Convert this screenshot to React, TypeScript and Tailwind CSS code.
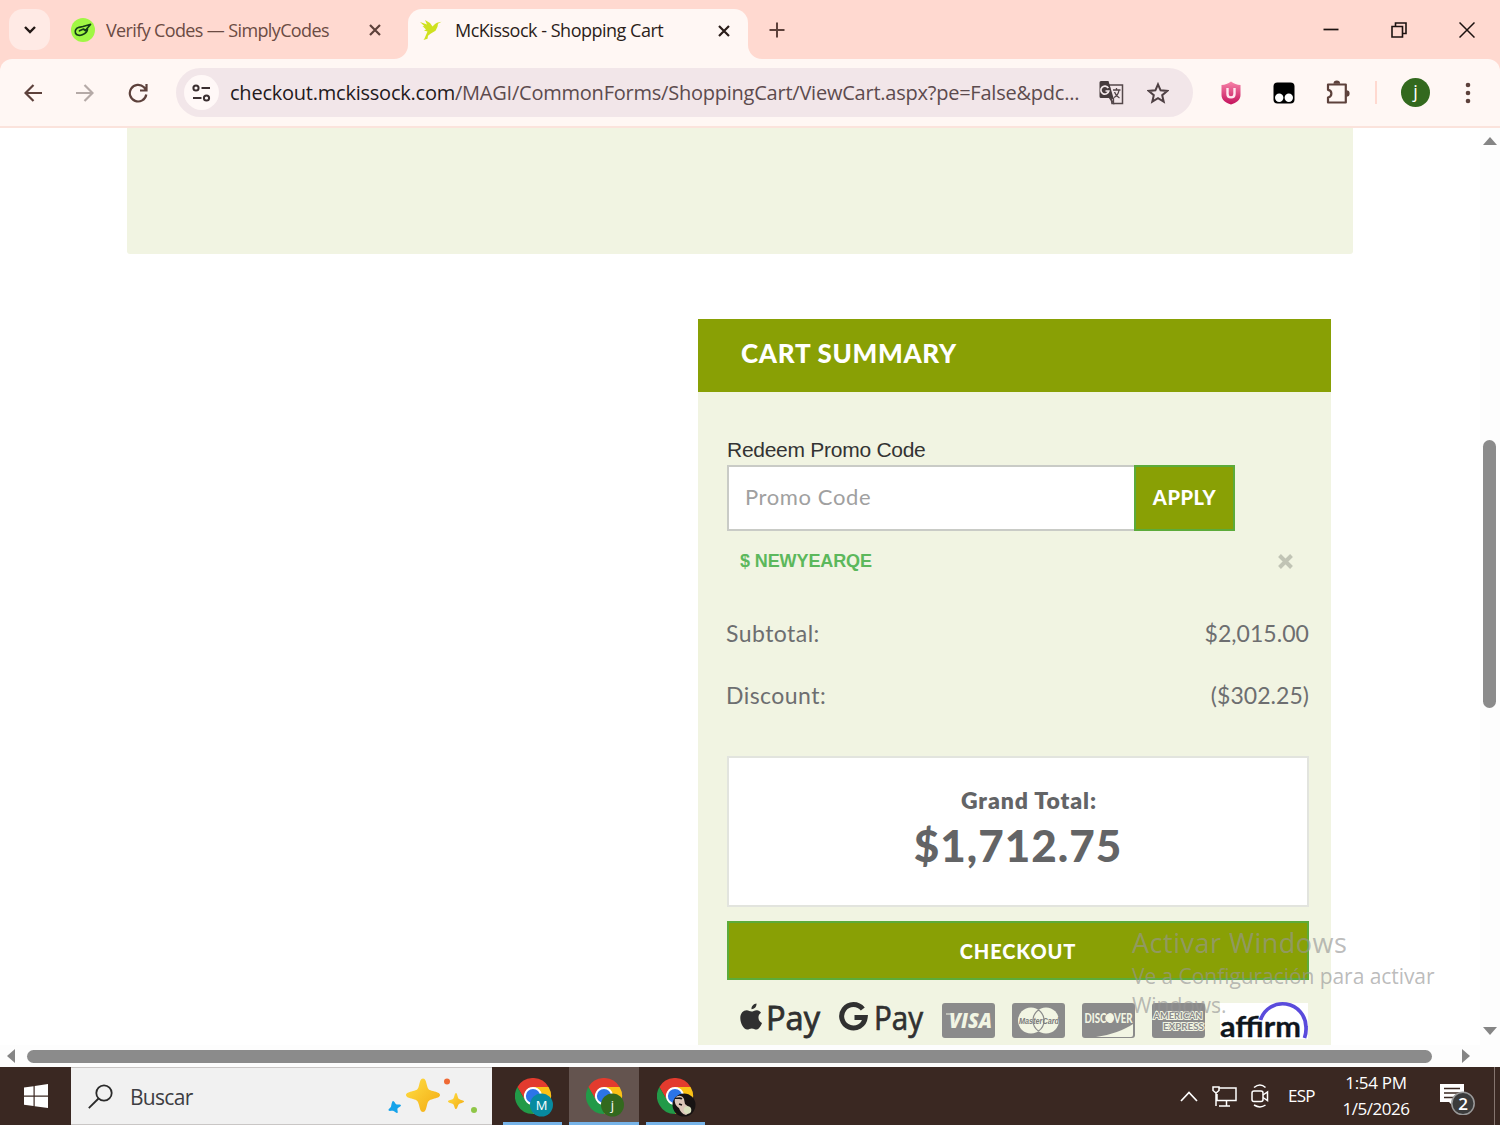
import type { ReactNode } from "react";
import { clsx } from "clsx";

const SEGOE = "font-['Open_Sans','Noto_Sans',sans-serif]";
const AVENIR = "font-['Lato',sans-serif]";
const ARIAL = "font-['Liberation_Sans',Arial,sans-serif]";

function CloseIcon({ className }: { className?: string }) {
  return (
    <svg viewBox="0 0 12 12" className={clsx("size-3", className)} fill="none" stroke="currentColor" strokeWidth="2.200">
      <path d="M1 1l10 10M11 1L1 11" />
    </svg>
  );
}

function SimplyCodesIcon() {
  return (
    <svg viewBox="0 0 24 24" className="size-6" fill="none">
      <circle cx="12" cy="12" r="12" fill="#a0f744" />
      <path
        d="M12 8.500l-4 .8c-3 .8-4.500 3.500-3.500 5.900 1 2.300 4.300 2.500 6.800 1.500 3.300-1.300 5.200-3.700 5.200-6M8.500 12.800l4-1.800 1.800 1.500L19.500 6.500M12 8.500l7-2"
        stroke="#143c17"
        strokeWidth="1.700"
        strokeLinecap="round"
        strokeLinejoin="round"
      />
    </svg>
  );
}

function HummingbirdIcon() {
  return (
    <svg viewBox="0 0 24 22" className="h-[22px] w-6">
      <path
        d="M1 2l7 2.500L6 0l5 3 2.500 3.500L16 4l2-1.200 4.500-1-3.500 2-.5 3-2 4-5 3-2.500 2-.5 3-4 1.200 1-1.500L7 15l1.500-3.500L5 10.500l2-1L3.500 6l2 .300z"
        fill="#cfe11f"
      />
    </svg>
  );
}

function TranslateIcon() {
  return (
    <svg viewBox="0 0 25 25" className="size-[25px]">
      <path d="M10 5h13.500v18.500H13z" fill="none" stroke="#54474a" strokeWidth="1.500" />
      <path d="M2 1h7.500l5 17H2a1.500 1.500 0 0 1-1.500-1.500v-14A1.500 1.500 0 0 1 2 1z" fill="#463b3d" />
      <path d="M9.300 8A4 4 0 1 0 9.800 11H6.500" fill="none" stroke="#f3e8ea" strokeWidth="1.700" />
      <path d="M14 10h7.500M17.500 8v2M20 10c-.5 4-3 6.500-5 7.500M15.500 12c1 3 3 5 5 6M11 18.500l3.500 4.500v-4.500z" fill="none" stroke="#54474a" strokeWidth="1.300" />
    </svg>
  );
}

function PuzzleIcon() {
  return (
    <svg viewBox="0 0 26 26" className="size-[26px]">
      <path
        d="M3 4.500h17.800v18H3v-5c4.500-.8 4.500-7 0-7.700z"
        fill="none"
        stroke="#5d413b"
        strokeWidth="2.200"
        strokeLinejoin="round"
      />
      <path d="M8.500 3.700a3.300 3.300 0 0 1 6.600 0zM21.300 10.200a3.300 3.300 0 0 1 0 6.600z" fill="#5d413b" />
    </svg>
  );
}

function Browser() {
  return (
    <header className={clsx("shrink-0 bg-[#ffd9d0]", SEGOE)}>
      {/* Tab strip */}
      <div className="flex h-[59px] items-center">
        <div className="ml-[9px] flex size-[41px] items-center justify-center rounded-[14px] bg-[#ffeae5]">
          <svg viewBox="0 0 12 8" className="h-2 w-3" fill="none" stroke="#231815" strokeWidth="2.400">
            <path d="M1 1l5 5 5-5" />
          </svg>
        </div>
        <div className="ml-[21px] flex w-[337px] items-center text-[#6b4b43]">
          <SimplyCodesIcon />
          <span className="ml-[11px] w-[263px] pt-0.5 text-[18px] tracking-[-0.63px] whitespace-nowrap">Verify Codes — SimplyCodes</span>
          <CloseIcon className="text-[#5d413b]" />
        </div>
        <div className="relative flex h-[50px] w-[340px] self-end items-center rounded-t-[14px] bg-[#fff7f4] pb-[7px] pl-[11px] text-[#2b1d1a]">
          <svg viewBox="0 0 14 14" className="absolute bottom-0 -left-[14px] size-[14px] text-[#fff7f4]">
            <path d="M14 0v14H0A14 14 0 0 0 14 0z" fill="currentColor" />
          </svg>
          <HummingbirdIcon />
          <span className="ml-3 w-[263px] text-[18px] tracking-[-0.49px] whitespace-nowrap">McKissock - Shopping Cart</span>
          <CloseIcon className="text-[#2b1d1a]" />
          <svg viewBox="0 0 14 14" className="absolute -right-[14px] bottom-0 size-[14px] text-[#fff7f4]">
            <path d="M0 0v14h14A14 14 0 0 1 0 0z" fill="currentColor" />
          </svg>
        </div>
        <svg viewBox="0 0 16 16" className="ml-[21px] size-4" stroke="#5d413b" strokeWidth="2">
          <path d="M8 .5v15M.5 8h15" />
        </svg>
        <div className="mr-[25px] ml-auto flex items-center gap-[52px]">
          <svg viewBox="0 0 16 16" className="size-4" stroke="#1c1210" strokeWidth="1.700">
            <path d="M.5 7.500h15" />
          </svg>
          <svg viewBox="0 0 16 16" className="size-4" fill="none" stroke="#1c1210" strokeWidth="1.600">
            <path d="M1 4.500h10.500v10.500H1zM4.500 4V1H15v10.500h-3" />
          </svg>
          <svg viewBox="0 0 16 16" className="size-4" stroke="#1c1210" strokeWidth="1.500">
            <path d="M.5.5l15 15M15.500.5l-15 15" />
          </svg>
        </div>
      </div>

      {/* Toolbar */}
      <div className="flex h-[69px] items-center rounded-t-[12px] border-b-2 border-[#fbe3dc] bg-[#fff7f4]">
        <svg viewBox="0 0 18 18" className="ml-6 size-[18px]" fill="none" stroke="#5d413b" strokeWidth="2.200">
          <path d="M18 9H1.500M9.500 1L1.500 9l8 8" />
        </svg>
        <svg viewBox="0 0 18 18" className="ml-[34px] size-[18px]" fill="none" stroke="#b5aaa7" strokeWidth="2.200">
          <path d="M0 9h16.500M8.500 1l8 8-8 8" />
        </svg>
        <svg viewBox="0 0 20 20" className="ml-[34px] size-5" fill="none" stroke="#5d413b" strokeWidth="2.200">
          <path d="M18.300 11.500A8.300 8.300 0 1 1 16 4.300l2 2.500M18.500 1v6.500H12" />
        </svg>
        <div className="ml-[28px] flex h-[49px] w-[1017px] items-center rounded-full bg-[#f2e6e9] pl-2">
          <div className="flex size-[35px] items-center justify-center rounded-full bg-[#fff8f7]">
            <svg viewBox="0 0 19 18" className="h-[18px] w-[19px]" fill="none" stroke="#3a2e30" strokeWidth="2">
              <circle cx="4" cy="4" r="2.600" />
              <circle cx="14.500" cy="14" r="2.600" />
              <path d="M9.500 4H18M1 14h8.500" />
            </svg>
          </div>
          <div className="ml-[11px] w-[869px] pt-px text-[20px] tracking-[-0.23px] whitespace-nowrap text-[#5c4b4e]">
            <span className="text-[#231a1c]">checkout.mckissock.com</span>
            /MAGI/CommonForms/ShoppingCart/ViewCart.aspx?pe=False&amp;pdc...
          </div>
          <TranslateIcon />
          <svg viewBox="0 0 22 22" className="ml-[23px] size-[22px]" fill="none" stroke="#4f4144" strokeWidth="2">
            <path d="M11 2.300l2.600 6 6.600.6-5 4.300 1.500 6.500-5.700-3.500-5.700 3.500 1.500-6.500-5-4.300 6.600-.6z" />
          </svg>
        </div>
        <svg viewBox="0 0 20 24" className="ml-[28px] h-6 w-5">
          <defs>
            <linearGradient id="shield" x1="0" y1="0" x2="0" y2="1">
              <stop offset="0" stopColor="#f783a8" />
              <stop offset="1" stopColor="#c4125c" />
            </linearGradient>
          </defs>
          <path d="M10 .5c3 2.500 6 3.200 9.500 3.500v10c0 5-4 7.500-9.500 9.500C4.500 21.500.5 19 .5 14V4C4 3.700 7 3 10 .5z" fill="url(#shield)" />
          <path d="M6.500 7v6c0 4.500 7 4.500 7 0V7" fill="none" stroke="#ffe8f0" strokeWidth="2.400" />
        </svg>
        <svg viewBox="0 0 22 22" className="ml-8 size-[22px]">
          <rect x=".5" y=".5" width="21" height="21" rx="4" />
          <circle cx="6.200" cy="15.800" r="4.200" fill="#fff" />
          <circle cx="15.800" cy="15.800" r="4.200" fill="#fff" />
        </svg>
        <div className="ml-[30px]">
          <PuzzleIcon />
        </div>
        <div className="ml-6 h-[23px] w-[2px] bg-[#ffd9d0]" />
        <div className="ml-6 flex size-[29px] items-center justify-center rounded-full bg-[#33691e] pb-0.5 text-[18px] text-white">
          j
        </div>
        <svg viewBox="0 0 6 22" className="ml-[35px] h-[22px] w-1.5" fill="#5d413b">
          <circle cx="3" cy="3" r="2.300" />
          <circle cx="3" cy="11" r="2.300" />
          <circle cx="3" cy="19" r="2.300" />
        </svg>
      </div>
    </header>
  );
}

function SummaryRow({ label, value }: { label: string; value: string }) {
  return (
    <div className="mb-[31px] flex h-[31px] items-center justify-between text-[23px] text-[#6d6e70]">
      <span className="-ml-px tracking-[0.45px]">{label}</span>
      <span className="tracking-[0.05px]">{value}</span>
    </div>
  );
}

function Card({ children }: { children: ReactNode }) {
  return (
    <svg viewBox="0 0 53 35" className="h-[35px] w-[53px] shrink-0 overflow-visible">
      <rect width="53" height="35" rx="3" fill="#8b8b8b" />
      {children}
    </svg>
  );
}

function PaymentMethods() {
  return (
    <div className="mt-[23px] flex items-start pl-[13px]">
      <svg viewBox="0 0 82 36" className="h-9 w-[82px] shrink-0 overflow-visible" fill="#303030">
        <path
          d="M16.500 0c.3 3-2 5.500-5 5.500C11.200 2.800 13.700.300 16.500 0zM21 9c-4 2.500-3 8.200 1 9.700-1.200 3.300-3.500 6.300-5.700 6.300-1.700 0-2.600-1-4.500-1s-3 1-4.600 1C3.700 25 .300 19 .300 14c0-4.700 3-7.500 6.400-7.500 2 0 3.300 1.200 4.800 1.200 1.400 0 3-1.400 5.500-1.300 1.600 0 3.100.9 4 2.600z"
          transform="translate(0 .5) scale(1 1.040)"
        />
        <text x="26" y="27" fontFamily="Open Sans" fontSize="32" textLength="54" lengthAdjust="spacingAndGlyphs" stroke="#303030" strokeWidth=".8">
          Pay
        </text>
      </svg>
      <svg viewBox="0 0 86 36" className="ml-[18px] h-9 w-[86px] shrink-0 overflow-visible" fill="#303030">
        <path d="M22.800 6A11.800 11.800 0 1 0 25.200 14.500H14.500" fill="none" stroke="#303030" strokeWidth="5" />
        <text x="34" y="27" fontFamily="Open Sans" fontSize="32" textLength="49" lengthAdjust="spacingAndGlyphs" stroke="#303030" strokeWidth=".7">
          Pay
        </text>
      </svg>
      <div className="ml-4 flex gap-[17px]">
        <Card>
          <text x="7" y="25" fontFamily="Open Sans" fontSize="20.500" fontWeight="800" fontStyle="italic" textLength="43" lengthAdjust="spacingAndGlyphs" fill="#f2f5e3">
            VISA
          </text>
          <path d="M4 11h6l2 7" stroke="#f2f5e3" strokeWidth="1.200" fill="none" />
        </Card>
        <Card>
          <circle cx="19" cy="17.500" r="13" fill="#f2f5e3" />
          <circle cx="34" cy="17.500" r="13" fill="#f2f5e3" />
          <path d="M26.500 6.900a13 13 0 0 0 0 21.200M26.500 6.900a13 13 0 0 1 0 21.200" fill="none" stroke="#8b8b8b" strokeWidth="1.200" />
          <text x="7" y="21" fontFamily="Liberation Sans" fontSize="9.500" fontStyle="italic" fontWeight="700" textLength="40" lengthAdjust="spacingAndGlyphs" fill="#7b7b7b">
            MasterCard
          </text>
        </Card>
        <Card>
          <text x="2.500" y="19.500" fontFamily="Lato" fontSize="12.500" fontWeight="900" textLength="48" lengthAdjust="spacingAndGlyphs" fill="#f2f5e3">
            DISCOVER
          </text>
          <circle cx="27.500" cy="15" r="4.300" fill="#f2f5e3" />
          <path d="M14 34c15-2 28-7 37-13v11a2 2 0 0 1-2 2z" fill="#f2f5e3" />
        </Card>
        <Card>
          <g fill="#8b8b8b" stroke="#f2f5e3" strokeWidth="2" paintOrder="stroke" fontFamily="Lato" fontSize="10" fontWeight="700">
            <text x="1.500" y="15.500" textLength="49" lengthAdjust="spacingAndGlyphs">AMERICAN</text>
            <text x="11" y="27" textLength="41" lengthAdjust="spacingAndGlyphs">EXPRESS</text>
          </g>
        </Card>
      </div>
      <svg viewBox="0 0 88 36" className="ml-[15px] h-9 w-[88px] shrink-0 overflow-visible bg-white">
        <path d="M40.500 17A23.300 23.300 0 0 1 86 24a27 27 0 0 1-1.500 11" fill="none" stroke="#5a4bdc" strokeWidth="3.700" />
        <text x="0" y="34" fontFamily="Lato" fontSize="29" fontWeight="700" textLength="81" lengthAdjust="spacingAndGlyphs" fill="#10161d" stroke="#10161d" strokeWidth=".3">
          affirm
        </text>
      </svg>
    </div>
  );
}

function CartSummary() {
  return (
    <section className={clsx("mt-[65px] ml-[698px] h-[727px] w-[633px] bg-[#f1f4e2]", AVENIR)}>
      <h2 className="flex h-[73px] items-center bg-[#89a005] pb-[5px] pl-[43px] text-[26px] font-black tracking-[0.7px] text-white">
        CART SUMMARY
      </h2>
      <div className="pr-[22px] pl-[29px]">
        <label className={clsx("block pt-[44px] pb-0.5 text-[21px] leading-[28px] tracking-[-0.27px] text-[#333]", ARIAL)}>
          Redeem Promo Code
        </label>
        <div className="-mt-px flex h-[66px]">
          <input
            placeholder="Promo Code"
            className="w-[407px] border-2 border-r-0 border-[#c9cbc6] bg-white pb-1 pl-4 text-[22px] tracking-[0.6px] placeholder:text-[#a0a0a0]"
          />
          <button className="w-[101px] border-2 border-[#5cab3a] bg-[#89a005] pb-0.5 text-[20px] font-black tracking-[0.5px] text-white">
            APPLY
          </button>
        </div>
        <div className={clsx("mt-[15px] flex h-[30px] items-center pl-[13px] text-[#5cb85c]", ARIAL)}>
          <span className="text-[18px] font-bold tracking-[-0.1px] whitespace-nowrap">$ NEWYEARQE</span>
          <svg viewBox="0 0 15 15" className="mr-[16px] ml-auto size-[15px]" stroke="#c1c4b5" strokeWidth="4">
            <path d="M1.500 1.500l12 12M13.500 1.500l-12 12" />
          </svg>
        </div>
        <div className="mt-[42px]">
          <SummaryRow label="Subtotal:" value="$2,015.00" />
          <SummaryRow label="Discount:" value="($302.25)" />
        </div>
        <div className="mt-[45px] flex h-[151px] flex-col items-center border-2 border-[#e2e4de] bg-white pt-[26px] text-[#636466]">
          <span className="pl-[22px] text-[23px] leading-[32px] font-extrabold tracking-[0.9px]">Grand Total:</span>
          <span className="text-[44px] leading-[58px] font-black tracking-[1px]">$1,712.75</span>
        </div>
        <button className="mt-[14px] h-[59px] w-full border-2 border-[#5cab3a] bg-[#89a005] text-[20px] font-black tracking-[0.9px] text-white">
          CHECKOUT
        </button>
        <PaymentMethods />
      </div>
    </section>
  );
}

function Page() {
  return (
    <main className="relative flex h-[939px] shrink-0 flex-col bg-white">
      <div className="flex h-[917px]">
        <div className="w-[1480px] overflow-hidden">
          <div className="ml-[127px] h-[126px] w-[1226px] rounded-b-[3px] bg-[#f1f4e2]" />
          <CartSummary />
        </div>
        <div className="flex w-5 flex-col items-center bg-[#fdfdfd] pt-[9px] pr-px">
          <svg viewBox="0 0 14 8" className="h-2 w-3.5" fill="#858585">
            <path d="M0 8l7-8 7 8z" />
          </svg>
          <div className="mt-[295px] h-[268px] w-[13px] rounded-full bg-[#8b8b8b]" />
          <svg viewBox="0 0 14 8" className="mt-[319px] h-2 w-3.5" fill="#858585">
            <path d="M0 0l7 8 7-8z" />
          </svg>
        </div>
      </div>
      <div className="flex h-[22px] items-center bg-[#fdfdfd] pl-[7px]">
        <svg viewBox="0 0 8 14" className="h-3.5 w-2" fill="#858585">
          <path d="M8 0L0 7l8 7z" />
        </svg>
        <div className="ml-3 h-[13px] w-[1405px] rounded-full bg-[#8b8b8b]" />
        <svg viewBox="0 0 8 14" className="ml-[30px] h-3.5 w-2" fill="#858585">
          <path d="M0 0l8 7-8 7z" />
        </svg>
      </div>

      {/* Activation watermark floats over the page */}
      <div className={clsx("pointer-events-none absolute top-[796px] left-[1132px] w-[340px] text-[#969696]/65", SEGOE)}>
        <p className="text-[27px] leading-[38px] tracking-[0.5px] whitespace-nowrap">Activar Windows</p>
        <p className="text-[21px] leading-[29px] tracking-[-0.06px]">
          Ve a Configuración para activar
          <br />
          Windows.
        </p>
      </div>
    </main>
  );
}

function ChromeIcon({ active, underline, children }: { active?: boolean; underline: string; children: ReactNode }) {
  return (
    <div className={clsx("flex h-full w-[70px] flex-col items-center", active && "bg-[#64544f]")}>
      <svg viewBox="0 0 40 40" className="mt-[11px] ml-1 size-10">
        <g transform="scale(.75)">
          <circle cx="24" cy="24" r="13" fill="#fff" />
          <path d="M3.200 12A24 24 0 0 1 44.800 12L24 12A12 12 0 0 0 13.600 30z" fill="#e33b2e" />
          <path d="M3.200 12A24 24 0 0 1 44.800 12L24 12A12 12 0 0 0 13.600 30z" fill="#fbc116" transform="rotate(120 24 24)" />
          <path d="M3.200 12A24 24 0 0 1 44.800 12L24 12A12 12 0 0 0 13.600 30z" fill="#229a48" transform="rotate(240 24 24)" />
          <circle cx="24" cy="24" r="9.500" fill="#2c74e8" />
        </g>
        {children}
      </svg>
      <div className={clsx("mt-auto h-[3px] bg-[#76b3e8]", underline)} />
    </div>
  );
}

function Badge({ letter, color }: { letter: string; color: string }) {
  return (
    <>
      <circle cx="26.500" cy="27" r="11.500" fill={color} />
      <text x="26.500" y="31.500" fontFamily="Open Sans" fontSize="13" fill="#fff" textAnchor="middle">
        {letter}
      </text>
    </>
  );
}

function Taskbar() {
  return (
    <footer className={clsx("flex h-[58px] shrink-0 items-center bg-[#3a2822] text-white", SEGOE)}>
      <div className="flex w-[71px] items-center justify-center">
        <svg viewBox="0 0 24 24" className="size-6" fill="#fff">
          <path d="M0 3.500l9.500-1.300v9.300H0zM10.700 2L24 0v11.500H10.700zM0 12.700h9.500V22L0 20.700zM10.700 12.700H24V24l-13.300-1.800z" />
        </svg>
      </div>
      <div className="flex h-full w-[421px] items-center border-y border-[#c9c6c5] bg-[#f1f1f1] pl-[17px] text-[#3d3d42]">
        <svg viewBox="0 0 25 25" className="size-[25px]" fill="none" stroke="#2a2a2a" strokeWidth="1.800">
          <circle cx="16" cy="9" r="7.700" />
          <path d="M10.500 14.500L.800 24.200" />
        </svg>
        <span className="ml-[17px] pt-[3px] text-[21px] tracking-[-0.7px]">Buscar</span>
        <svg viewBox="0 0 90 36" className="mr-[15px] ml-auto h-9 w-[90px]">
          <defs>
            <linearGradient id="spark" x1="0" y1="0" x2="1" y2="1">
              <stop offset="0" stopColor="#ffdf45" />
              <stop offset="1" stopColor="#f3aa12" />
            </linearGradient>
          </defs>
          <path d="M36 .5c2.500 0 3 3 4 7s2 4.500 6 5.500 7 2 7 4-3 3-7 4-5 2-6 6-1.500 7-4 7-3-3-4-7-2-5-6-6-7-2-7-4 3-3 7-4 5-1.500 6-5.500 1.500-7 4-7z" fill="url(#spark)" />
          <path d="M69 15c1.500 0 1.500 5 3 6s5 1.200 5 2.500-4 1.500-5.200 2.800S70.500 31 69 31s-1.500-3.500-2.800-4.800S61 25 61 23.500s4-1.500 5.200-2.700S67.500 15 69 15z" fill="url(#spark)" />
          <path d="M6 23c1.200-.3 2 2.500 3.200 3.200S14 26 14 27.300s-3 2-3.500 3.200 1 4.200-.2 4.500-2.800-2-4.300-2.200-4 .800-4.500-.5 2.200-2.300 2.500-3.500S4.800 23.300 6 23z" fill="#16a3ea" />
          <circle cx="60" cy="3.500" r="3" fill="#ef6a35" />
          <circle cx="87" cy="32" r="3" fill="#8fc648" />
        </svg>
      </div>
      <div className="ml-1.5 flex h-full gap-px">
        <ChromeIcon underline="mr-[2px] w-[59px]">
          <Badge letter="M" color="#078aa0" />
        </ChromeIcon>
        <ChromeIcon active underline="w-[70px]">
          <Badge letter="j" color="#33691e" />
        </ChromeIcon>
        <ChromeIcon underline="w-[59px]">
          <circle cx="27" cy="27" r="11.500" fill="#171313" />
          <path d="M18 20c3-3 7-3 9 1l1 5 5 4c1 2 0 5-4 7-4-1-6-4-7-7-3-2-5-5-4-10z" fill="#dbc6b9" />
          <path d="M18 20c2 1 5-1 7 1M20 30l-2 3M22 26l3 1" stroke="#171313" strokeWidth="1.600" fill="none" />
          <circle cx="30.500" cy="32" r="3.800" fill="#d8dfbd" />
        </ChromeIcon>
      </div>
      <div className="ml-auto flex h-full items-center">
        <svg viewBox="0 0 18 11" className="h-[11px] w-[18px]" fill="none" stroke="#fff" strokeWidth="1.700">
          <path d="M1 10l8-8.500L17 10" />
        </svg>
        <svg viewBox="0 0 25 21" className="ml-[14px] h-[21px] w-[25px]" fill="none" stroke="#fff" strokeWidth="1.500">
          <path d="M7 2h17v12.500H5V8M14.500 14.500V20M7 20h11M1 1h6v3.500L4 7 1 4.500zM4 7v13" />
        </svg>
        <svg viewBox="0 0 18 24" className="ml-[14px] h-6 w-[18px]" fill="none" stroke="#fff" strokeWidth="1.500">
          <rect x="1" y="7" width="11" height="10.500" rx="2" />
          <path d="M12 11l4.500-3v8.500L12 13.500M3 3.500c4-3.300 8-3.300 11.500 0M3 21c4 2.500 8 2.500 11.500 0" />
        </svg>
        <span className="ml-[19px] w-[27px] text-[17px] tracking-[-0.8px]">ESP</span>
        <div className="ml-[27px] flex w-[68px] flex-col items-center text-[17px] leading-[26px] whitespace-nowrap">
          <span className="tracking-[-0.3px]">1:54 PM</span>
          <span className="tracking-[-0.5px]">1/5/2026</span>
        </div>
        <svg viewBox="0 0 36 38" className="ml-[29px] h-[38px] w-9">
          <path d="M1 7h24v18H16v6l-6-6H1z" fill="#fff" />
          <path d="M5 11.500h16M5 16h16M5 20.500h11" stroke="#3a2822" strokeWidth="1.500" />
          <circle cx="24" cy="26" r="11.200" fill="#3b3b3b" stroke="#999" strokeWidth="1.500" transform="translate(0 .5)" />
          <text x="24" y="32.500" fontFamily="Open Sans" fontSize="17" fontWeight="600" fill="#fff" textAnchor="middle">
            2
          </text>
        </svg>
        <div className="mr-[5px] ml-[19px] h-full w-px bg-[#85756f]" />
      </div>
    </footer>
  );
}

export default function App() {
  return (
    <div className="flex h-[1125px] w-[1500px] flex-col overflow-hidden bg-white">
      <Browser />
      <Page />
      <Taskbar />
    </div>
  );
}
